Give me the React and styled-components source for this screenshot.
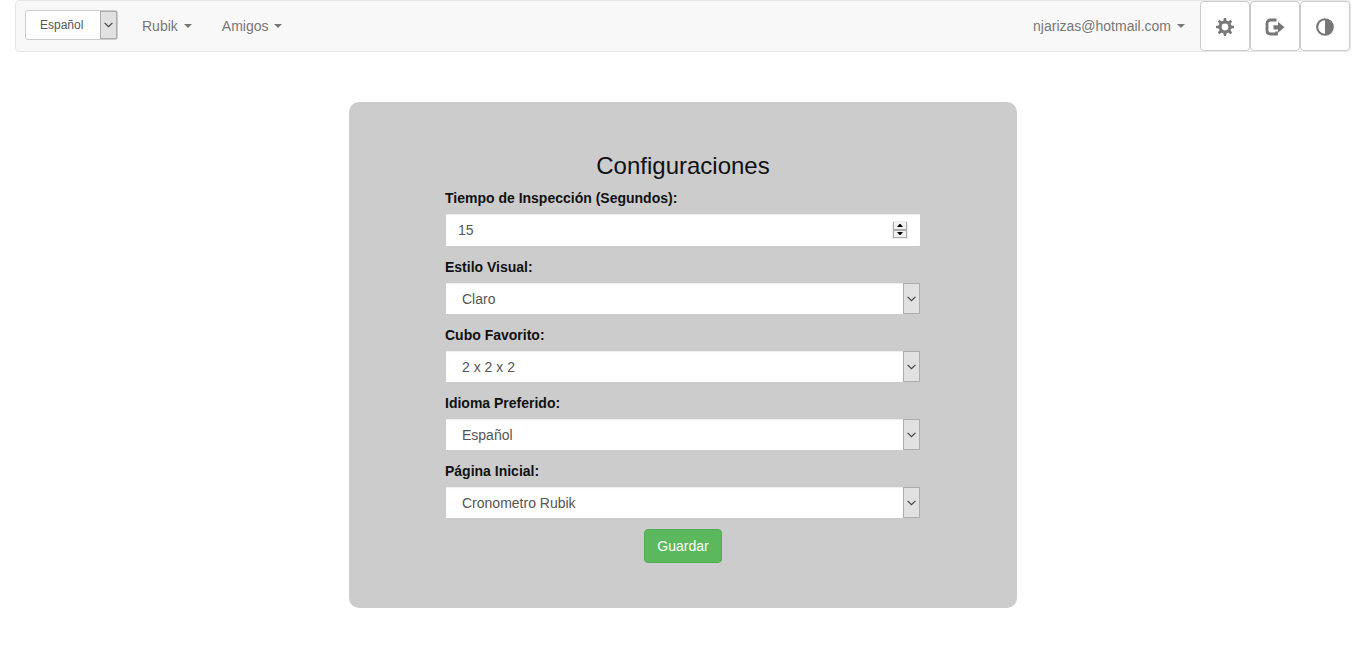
import React, { useState } from "react";
import styled, { createGlobalStyle } from "styled-components";

const GlobalStyle = createGlobalStyle`
  *, *::before, *::after { box-sizing: border-box; }
  body {
    margin: 0;
    background: #fff;
    color: #111;
    font: 14px/20px Arial, "Liberation Sans", sans-serif;
  }
  button, input, select { font-family: inherit; }
`;

const Page = styled.div`
  padding: 0 15px;
`;

const Navbar = styled.nav`
  display: flex;
  justify-content: space-between;
  min-height: 52px;
  background: #f8f8f8;
  border: 1px solid #e7e7e7;
  border-radius: 4px;
`;

const NavGroup = styled.div`
  display: flex;
  align-items: flex-start;
`;

const NavLink = styled.a`
  display: flex;
  align-items: center;
  gap: 6px;
  padding: 15px;
  color: #777;
  text-decoration: none;
  white-space: nowrap;

  &::after {
    content: "";
    border: 4px solid transparent;
    border-top-color: currentColor;
    border-bottom: 0;
  }
`;

const NavButton = styled.button`
  display: flex;
  align-items: center;
  justify-content: center;
  width: 50px;
  height: 50px;
  padding: 2px 0 0;
  background: #fff;
  border: 1px solid #ccc;
  border-radius: 4px;
  color: #777;
`;

const SelectFrame = styled.div`
  display: flex;
  position: relative;
  height: ${(p) => (p.$compact ? 30 : 33)}px;
  width: ${(p) => (p.$compact ? "93px" : "100%")};
  margin: ${(p) => (p.$compact ? "9px" : "0")};
  background: #fff;
  border: 1px solid #ccc;
  border-radius: ${(p) => (p.$compact ? 3 : 0)}px;
  box-shadow: ${(p) => (p.$compact ? "none" : "inset 0 1px 1px rgba(0, 0, 0, 0.08)")};
`;

const Select = styled.select`
  appearance: none;
  flex: 1;
  min-width: 0;
  padding: 0 ${(p) => (p.$compact ? 14 : 16)}px;
  background: transparent;
  border: 0;
  color: #555;
  font-size: ${(p) => (p.$compact ? 12 : 14)}px;
`;

const DropArrow = styled.span`
  position: absolute;
  top: 0;
  right: 0;
  bottom: 0;
  display: flex;
  align-items: center;
  justify-content: center;
  width: 17px;
  padding-right: 1px;
  background: #e1e1e1;
  border: 1px solid #adadad;
  pointer-events: none;
`;

const Card = styled.main`
  width: 50%;
  margin: 50px auto 0;
  padding: 51px 96px 45px;
  background: #ccc;
  border-radius: 10px;
`;

const Title = styled.h1`
  margin: 0 0 9px;
  font-size: 24px;
  font-weight: 400;
  line-height: 26px;
  text-align: center;
`;

const Form = styled.form`
  display: flex;
  flex-direction: column;
  gap: 10px;
`;

const Field = styled.div`
  display: flex;
  flex-direction: column;
  gap: 5px;
`;

const Label = styled.label`
  font-weight: 700;
`;

const NumberFrame = styled.div`
  display: flex;
  align-items: center;
  height: 34px;
  padding: 0 12px;
  background: #fff;
  border: 1px solid #ccc;
  box-shadow: inset 0 1px 1px rgba(0, 0, 0, 0.08);
`;

const NumberInput = styled.input`
  appearance: textfield;
  flex: 1;
  min-width: 0;
  padding: 0;
  background: transparent;
  border: 0;
  color: #555;
  font-size: 14px;

  &::-webkit-inner-spin-button { appearance: none; }
`;

const Stepper = styled.div`
  display: flex;
  flex-direction: column;
  width: 16px;
  height: 18px;
  border: 1px solid #eee;
`;

const StepButton = styled.button`
  display: flex;
  align-items: center;
  justify-content: center;
  flex: 1;
  min-height: 0;
  padding: 0;
  background: #f0f0f0;
  border: 1px solid #adadad;
  border-top-width: ${(p) => (p.$up ? 0 : 1)}px;
`;

const SaveButton = styled.button`
  align-self: center;
  height: 34px;
  padding: 0 12px;
  background: #5cb85c;
  border: 1px solid #4cae4c;
  border-radius: 4px;
  color: #fff;
  font-size: 14px;
`;

function Chevron() {
  return (
    <svg width="9" height="6" viewBox="0 0 9 6" fill="none" stroke="#444" strokeWidth="1.2" aria-hidden="true">
      <path d="M.6 .8 4.5 4.7 8.4 .8" />
    </svg>
  );
}

function StepArrow({ up }) {
  return (
    <svg width="6" height="3" viewBox="0 0 6 3" aria-hidden="true">
      <path d={up ? "M0 3 2.500 0h1L6 3z" : "M0 0 2.500 3h1L6 0z"} />
    </svg>
  );
}

function CogIcon() {
  return (
    <svg width="18" height="18" viewBox="0 0 18 18" aria-hidden="true">
      {[0, 45, 90, 135, 180, 225, 270, 315].map((a) => (
        <path key={a} d="M7.900 0h2.200l.8 4.500H7.100z" fill="currentColor" transform={`rotate(${a} 9 9)`} />
      ))}
      <circle cx="9" cy="9" r="4.900" fill="none" stroke="currentColor" strokeWidth="3" />
    </svg>
  );
}

function LogOutIcon() {
  return (
    <svg width="20" height="18" viewBox="0 0 20 18" aria-hidden="true">
      <path d="M11.500 2H5.500Q2 2 2 5.500v7Q2 16 5.500 16h6v-2.500" fill="none" stroke="currentColor" strokeWidth="2.800" />
      <path d="M8.500 7.200H13V3.800L19.500 9.300 13 14.800V11.400H8.500z" fill="currentColor" />
    </svg>
  );
}

function ContrastIcon() {
  return (
    <svg width="18" height="18" viewBox="0 0 18 18" aria-hidden="true">
      <circle cx="9" cy="9" r="7.800" fill="none" stroke="currentColor" strokeWidth="2.100" />
      <path d="M9 1a8 8 0 0 1 0 16z" fill="currentColor" />
    </svg>
  );
}

function Dropdown({ compact, options, ...rest }) {
  return (
    <SelectFrame $compact={compact}>
      <Select $compact={compact} {...rest}>
        {options.map((o) => (
          <option key={o}>{o}</option>
        ))}
      </Select>
      <DropArrow>
        <Chevron />
      </DropArrow>
    </SelectFrame>
  );
}

const selects = [
  { id: "estilo", label: "Estilo Visual:", options: ["Claro", "Oscuro"] },
  { id: "cubo", label: "Cubo Favorito:", options: ["2 x 2 x 2", "3 x 3 x 3", "4 x 4 x 4"] },
  { id: "idioma", label: "Idioma Preferido:", options: ["Español", "English"] },
  { id: "pagina", label: "Página Inicial:", options: ["Cronometro Rubik", "Amigos"] },
];

export default function App() {
  const [seconds, setSeconds] = useState(15);
  return (
    <>
      <GlobalStyle />
      <Page>
        <Navbar>
          <NavGroup>
            <Dropdown compact aria-label="Idioma" options={["Español", "English"]} />
            <NavLink href="#rubik">Rubik</NavLink>
            <NavLink href="#amigos">Amigos</NavLink>
          </NavGroup>
          <NavGroup>
            <NavLink href="#cuenta">njarizas@hotmail.com</NavLink>
            <NavButton aria-label="Configuraciones"><CogIcon /></NavButton>
            <NavButton aria-label="Salir"><LogOutIcon /></NavButton>
            <NavButton aria-label="Contraste"><ContrastIcon /></NavButton>
          </NavGroup>
        </Navbar>
        <Card>
          <Title>Configuraciones</Title>
          <Form onSubmit={(e) => e.preventDefault()}>
            <Field>
              <Label htmlFor="tiempo">Tiempo de Inspección (Segundos):</Label>
              <NumberFrame>
                <NumberInput
                  id="tiempo"
                  type="number"
                  value={seconds}
                  onChange={(e) => setSeconds(Number(e.target.value))}
                />
                <Stepper>
                  <StepButton $up type="button" aria-label="Aumentar" onClick={() => setSeconds(seconds + 1)}>
                    <StepArrow up />
                  </StepButton>
                  <StepButton type="button" aria-label="Disminuir" onClick={() => setSeconds(seconds - 1)}>
                    <StepArrow />
                  </StepButton>
                </Stepper>
              </NumberFrame>
            </Field>
            {selects.map((s) => (
              <Field key={s.id}>
                <Label htmlFor={s.id}>{s.label}</Label>
                <Dropdown id={s.id} options={s.options} />
              </Field>
            ))}
            <SaveButton type="submit">Guardar</SaveButton>
          </Form>
        </Card>
      </Page>
    </>
  );
}
